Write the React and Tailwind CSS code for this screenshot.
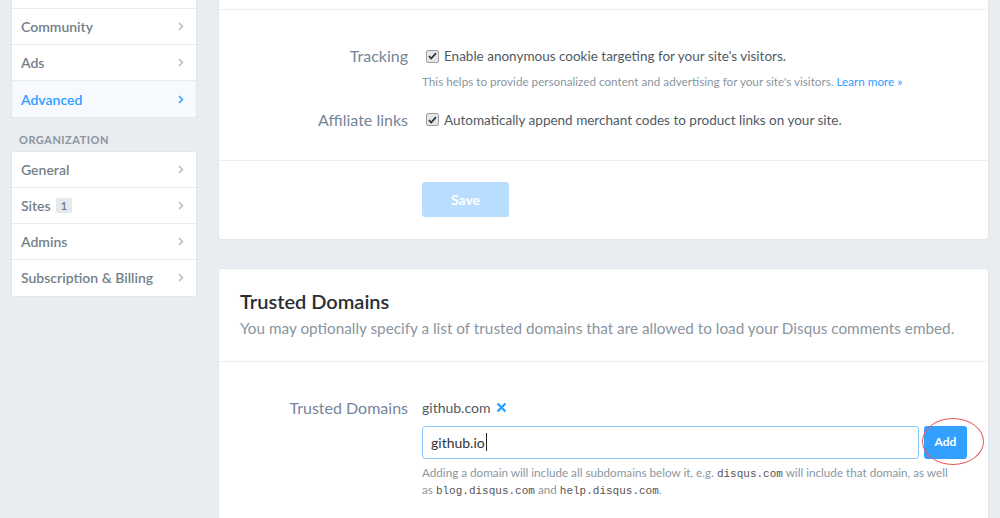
import React from "react";

const font = { fontFamily: '"Source Sans Pro", Lato, "Noto Sans", sans-serif' };
const mono = { fontFamily: '"Liberation Mono", monospace' };

function Chevron({ active }) {
  return (
    <svg width="6" height="9" viewBox="0 0 6 9" className={active ? "text-[#2e9fff]" : "text-[#b5bcc4]"}>
      <path d="M1 1l3.5 3.5L1 8" fill="none" stroke="currentColor" strokeWidth="1.5" />
    </svg>
  );
}

function NavItem({ label, active, badge }) {
  return (
    <div
      className={`h-[36px] px-[9px] flex items-center justify-between border-b border-[#e8ebee] last:border-b-0 text-[14px] font-semibold ${
        active ? "bg-[#f6f9fd] text-[#2e9fff]" : "text-[#747f8a]"
      }`}
    >
      <span className="flex items-center gap-[5px]">
        {label}
        {badge && (
          <span className="bg-[#e5e8ec] text-[#6d7782] text-[11px] leading-none px-[5px] py-[2px] rounded-[2px]">
            {badge}
          </span>
        )}
      </span>
      <span className="mr-[3px]">
        <Chevron active={active} />
      </span>
    </div>
  );
}

function Check() {
  return (
    <span className="w-[13px] h-[13px] rounded-[2px] border border-[#9aa0a6] bg-[#e4e6e9] flex items-center justify-center shrink-0">
      <svg width="9" height="8" viewBox="0 0 9 8">
        <path d="M1 4.2l2.2 2.3L8 1.2" fill="none" stroke="#333" strokeWidth="1.8" />
      </svg>
    </span>
  );
}

function Row({ label, children, className = "" }) {
  return (
    <div className={`flex ${className}`}>
      <div className="w-[189px] shrink-0 text-right text-[16px] text-[#75859a] leading-[22px]">{label}</div>
      <div className="ml-[14px] flex-1">{children}</div>
    </div>
  );
}

export default function App() {
  return (
    <div className="w-full h-[518px] overflow-hidden bg-[#e9ecf0] flex" style={font}>
      {/* SIDEBAR */}
      <div className="w-[186px] ml-[11px] shrink-0 -mt-[28px]">
        <div className="bg-white border border-[#e3e6ea] rounded-[2px]">
          <NavItem label="General" />
          <NavItem label="Community" />
          <NavItem label="Ads" />
          <NavItem label="Advanced" active />
        </div>
        <div className="text-[11px] font-bold tracking-[0.5px] text-[#8c969f] mt-[14px] mb-[2px] pl-[8px]">
          ORGANIZATION
        </div>
        <div className="bg-white border border-[#e3e6ea] rounded-[2px]">
          <NavItem label="General" />
          <NavItem label="Sites" badge="1" />
          <NavItem label="Admins" />
          <NavItem label="Subscription & Billing" />
        </div>
      </div>

      {/* MAIN */}
      <div className="ml-[21px] w-[771px] shrink-0">
        <div className="bg-white rounded-[3px] border border-[#e3e6ea] border-t-0">
          <div className="h-[10px] border-b border-[#eceef1]" />
          <div className="pt-[35px] pb-[29px] border-b border-[#eceef1]">
            <Row label="Tracking">
              <div className="flex items-center gap-[5px] text-[13.5px] text-[#4f5a65] leading-[22px] pl-[4px]">
                <Check />
                Enable anonymous cookie targeting for your site's visitors.
              </div>
              <div className="text-[11.7px] text-[#8a96a1] mt-[6px]">
                This helps to provide personalized content and advertising for your site's visitors.{" "}
                <span className="text-[#2e9fff]">Learn more »</span>
              </div>
            </Row>
            <Row label="Affiliate links" className="mt-[18px]">
              <div className="flex items-center gap-[5px] text-[13.5px] text-[#4f5a65] leading-[22px] pl-[4px]">
                <Check />
                Automatically append merchant codes to product links on your site.
              </div>
            </Row>
          </div>
          <div className="pt-[21px] pb-[22px] pl-[203px]">
            <button className="w-[87px] h-[35px] rounded-[3px] bg-[#b9ddff] text-white text-[14px] font-bold">
              Save
            </button>
          </div>
        </div>

        <div className="mt-[28px] bg-white rounded-[3px] border border-[#e3e6ea] h-[300px]">
          <div className="px-[21px] pt-[19px] pb-[22px] border-b border-[#eceef1]">
            <div className="text-[20px] font-semibold text-[#2a2f35] leading-[26px]">Trusted Domains</div>
            <div className="text-[15.3px] text-[#8a959f] leading-[22px] mt-[3px] whitespace-nowrap">
              You may optionally specify a list of trusted domains that are allowed to load your Disqus comments embed.
            </div>
          </div>
          <div className="pt-[35px] pr-[21px]">
            <Row label="Trusted Domains">
              <div className="flex items-center gap-[6px] text-[14px] text-[#4f5a65] leading-[22px]">
                github.com
                <svg width="11" height="11" viewBox="0 0 11 11">
                  <path d="M1.5 1.5l8 8M9.5 1.5l-8 8" stroke="#2e9fff" strokeWidth="2.4" />
                </svg>
              </div>
              <div className="flex mt-[7px] gap-[5px]">
                <div className="flex-1 h-[33px] border border-[#8ccaff] rounded-[3px] flex items-center px-[8px] text-[14px] text-[#333]">
                  github.io<span className="w-px h-[18px] bg-[#222] ml-[1px]" />
                </div>
                <div className="relative">
                  <button className="w-[43px] h-[33px] rounded-[3px] bg-[#33a0ff] text-white text-[12px] font-bold">
                    Add
                  </button>
                  <div className="absolute -left-[2px] -top-[8px] w-[62px] h-[47px] rounded-[50%] border border-[#e8585f]" />
                </div>
              </div>
              <div className="text-[11.7px] text-[#8a96a1] leading-[16px] mt-[5px] pr-[6px]">
                Adding a domain will include all subdomains below it, e.g.{" "}
                <code className="text-[#555] text-[11px] leading-[14px]" style={mono}>disqus.com</code>{" "}
                will include that domain, as well as{" "}
                <code className="text-[#555] text-[11px] leading-[14px]" style={mono}>blog.disqus.com</code>{" "}
                and{" "}
                <code className="text-[#555] text-[11px] leading-[14px]" style={mono}>help.disqus.com</code>.
              </div>
            </Row>
          </div>
        </div>
      </div>
    </div>
  );
}
